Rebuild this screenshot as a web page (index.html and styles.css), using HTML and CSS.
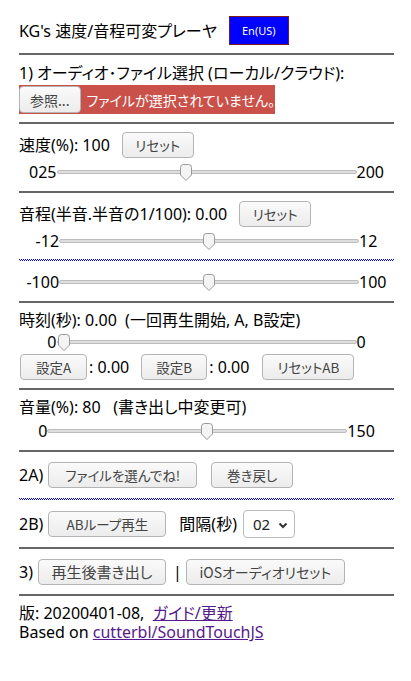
FILE: index.html
```html
<!DOCTYPE html>
<html lang="ja">
<head>
<meta charset="utf-8">
<title>KG's 速度/音程可変プレーヤ</title>
<link rel="stylesheet" href="styles.css">
</head>
<body>
<div class="page">
  <div class="title-row">
    <span class="title">KG's 速度/音程可変プレーヤ</span>
    <button class="lang">En(US)</button>
  </div>
  <hr class="rule">

  <section class="sec sec-file">
    <div class="line">1) オーディオ･ファイル選択 (ローカル/クラウド):</div>
    <div class="file">
      <button class="btn file-btn">参照...</button>
      <span class="file-msg">ファイルが選択されていません。</span>
    </div>
  </section>
  <hr class="rule">

  <section class="sec">
    <div class="row">
      <span>速度(%): 100</span>
      <button class="btn reset1">リセット</button>
    </div>
    <div class="slider">025<input type="range" min="25" max="200" value="100">200</div>
  </section>
  <hr class="rule">

  <section class="sec">
    <div class="row">
      <span>音程(半音.半音の1/100): 0.00</span>
      <button class="btn reset2">リセット</button>
    </div>
    <div class="slider">-12<input type="range" min="-12" max="12" value="0">12</div>
    <div class="dots"></div>
    <div class="slider slider-b">-100<input type="range" min="-100" max="100" value="0">100</div>
  </section>
  <hr class="rule">

  <section class="sec">
    <div class="line">時刻(秒): 0.00 &nbsp;(一回再生開始, A, B設定)</div>
    <div class="slider slider-t">0<input type="range" min="0" max="0" value="0">0</div>
    <div class="row ab">
      <button class="btn btn-a">設定A</button><span class="val">: 0.00</span>
      <button class="btn btn-b">設定B</button><span class="val">: 0.00</span>
      <button class="btn btn-r">リセットAB</button>
    </div>
  </section>
  <hr class="rule">

  <section class="sec">
    <div class="line">音量(%): 80 &nbsp;&nbsp;(書き出し中変更可)</div>
    <div class="slider slider-v">0<input type="range" min="0" max="150" value="80">150</div>
  </section>
  <hr class="rule">

  <section class="sec sec-2a">
    <div class="row">
      <span>2A)</span>
      <button class="btn w-play">ファイルを選んでね!</button>
      <button class="btn w-rew">巻き戻し</button>
    </div>
  </section>
  <div class="dots"></div>
  <section class="sec sec-2b">
    <div class="row">
      <span>2B)</span>
      <button class="btn w-ab">ABループ再生</button>
      <span class="gap-label">間隔(秒)</span>
      <select class="sel"><option>02</option></select>
    </div>
  </section>
  <hr class="rule">

  <section class="sec sec-3">
    <div class="row">
      <span>3)</span>
      <button class="btn w-exp">再生後書き出し</button>
      <span class="bar">|</span>
      <button class="btn w-ios">iOSオーディオリセット</button>
    </div>
  </section>
  <hr class="rule">

  <footer class="foot">
    <div>版: 20200401-08, &nbsp;<a href="#">ガイド/更新</a></div>
    <div>Based on <a href="#">cutterbl/SoundTouchJS</a></div>
  </footer>
</div>
</body>
</html>
```

FILE: styles.css
```css
html, body {
  margin: 0;
  padding: 0;
  background: #fff;
}
body {
  font-family: "Noto Sans", "Noto Sans CJK JP", sans-serif;
  font-size: 16px;
  line-height: 18px;
  color: #000;
  font-feature-settings: "palt";
}
.page {
  padding: 0 17px 0 19px;
}
.title-row {
  display: flex;
  align-items: center;
  height: 29px;
  padding-top: 16px;
  gap: 12px;
}
.title {
  font-size: 16px;
}
.lang {
  width: 60px;
  height: 29px;
  background: #0000ff;
  color: #fff;
  border: 1px solid #7a1a1a;
  font-family: "Noto Sans", sans-serif;
  font-size: 11px;
  padding: 0;
}
.rule {
  border: 0;
  height: 2px;
  background: #666;
  margin: 0;
}
.rule:first-of-type { margin-top: 8px; }
.dots {
  height: 2px;
  background:
    linear-gradient(90deg, #0000ff 1px, transparent 1px) 0 0 / 2px 1px repeat-x,
    linear-gradient(90deg, transparent 1px, #0000ff 1px) 0 1px / 2px 1px repeat-x;
}
.sec {
  padding: 8px 0 8px;
}
.line {
  height: 18px;
  white-space: pre;
}
.row {
  display: flex;
  align-items: center;
  height: 26px;
}
.btn {
  font-family: "Noto Sans CJK JP", "Noto Sans", sans-serif;
  font-size: 13.5px;
  color: #444;
  height: 26px;
  border: 1px solid #b4b4b4;
  border-radius: 4px;
  background: linear-gradient(#fafafa, #ececec);
  padding: 0 10px;
  line-height: 24px;
  font-feature-settings: "palt";
}
.sec-file { padding: 9px 0 8px; }
.file {
  display: flex;
  align-items: center;
  width: 256px;
  height: 29px;
  margin-top: 3px;
  background: #c9514a;
}
.file-btn {
  width: 67px;
  height: 27px;
  margin-left: 0;
  padding: 0;
  font-size: 14px;
}
.file-msg {
  color: #fff;
  margin-left: 6px;
  font-size: 14px;
  white-space: nowrap;
  font-family: "Noto Sans CJK JP", sans-serif;
}
.reset1 { margin-left: 12px; width: 72px; padding: 0; }
.reset2 { margin-left: 12px; width: 72px; padding: 0; }
.slider {
  text-align: center;
  height: 22px;
  line-height: 22px;
  margin-top: 3px;
  font-feature-settings: normal;
}
.slider-b { margin-top: 10px; }
.dots + .slider { margin-top: 10px; }
.sec > .dots { margin-top: 7px; }
.slider-t { margin-top: 2px; height: 22px; }
.ab { margin-top: 1px; }
.ab .btn { padding: 0; }
.btn-a { width: 67px; margin-left: 1px; }
.btn-b { width: 66px; margin-left: 12px; }
.btn-r { width: 92px; margin-left: 13px; }
.val { margin-left: 2px; }
.slider-v { margin-top: 4px; }

input[type=range] {
  -webkit-appearance: none;
  appearance: none;
  width: 300px;
  height: 18px;
  margin: 0;
  padding: 0;
  vertical-align: middle;
  background: transparent;
  position: relative;
  top: -2px;
}
input[type=range]::-webkit-slider-runnable-track {
  height: 4px;
  background: #dedede;
  border: 1px solid #bdbdbd;
  border-radius: 3px;
}
input[type=range]::-webkit-slider-thumb {
  -webkit-appearance: none;
  width: 12px;
  height: 17px;
  margin-top: -7px;
  border: 0;
  background: url("data:image/svg+xml,%3Csvg xmlns='http://www.w3.org/2000/svg' width='12' height='17' viewBox='0 0 12 17'%3E%3Cpath d='M0.5 3.5 Q0.5 0.5 3.5 0.5 H8.5 Q11.5 0.5 11.5 3.5 V11 L6 16.5 L0.5 11 Z' fill='%23f4f4f4' stroke='%23999'/%3E%3C/svg%3E") no-repeat;
}

.sec-2a { padding: 10px 0 10px; }
.sec-2a .row span:first-child { margin-right: 5px; }
.w-play { width: 149px; padding: 0; }
.w-rew { width: 82px; padding: 0; margin-left: 14px; }
.sec-2b { padding: 11px 0 10px; }
.sec-2b .row span:first-child { margin-right: 5px; }
.w-ab { width: 118px; padding: 0; }
.gap-label { margin-left: 13px; }
.sel {
  -webkit-appearance: none;
  appearance: none;
  margin-left: 6px;
  width: 52px;
  height: 28px;
  border: 1px solid #bbb;
  border-radius: 4px;
  background: #fff url("data:image/svg+xml,%3Csvg xmlns='http://www.w3.org/2000/svg' width='10' height='7' viewBox='0 0 10 7'%3E%3Cpath d='M1.5 1.5 L5 5 L8.5 1.5' fill='none' stroke='%23333' stroke-width='2'/%3E%3C/svg%3E") no-repeat 34px 11px;
  font-family: "Noto Sans", sans-serif;
  font-size: 15px;
  color: #222;
  padding: 0 0 0 9px;
}
.sec-3 { padding: 10px 0 9px; }
.sec-3 .row span:first-child { margin-right: 5px; }
.w-exp { width: 128px; padding: 0; font-size: 15px; }
.bar { margin: 0 4px 0 7px; }
.w-ios { width: 159px; padding: 0; font-size: 14px; }
.foot {
  padding-top: 8px;
  line-height: 19px;
}
.foot a { color: #551a8b; }
```
